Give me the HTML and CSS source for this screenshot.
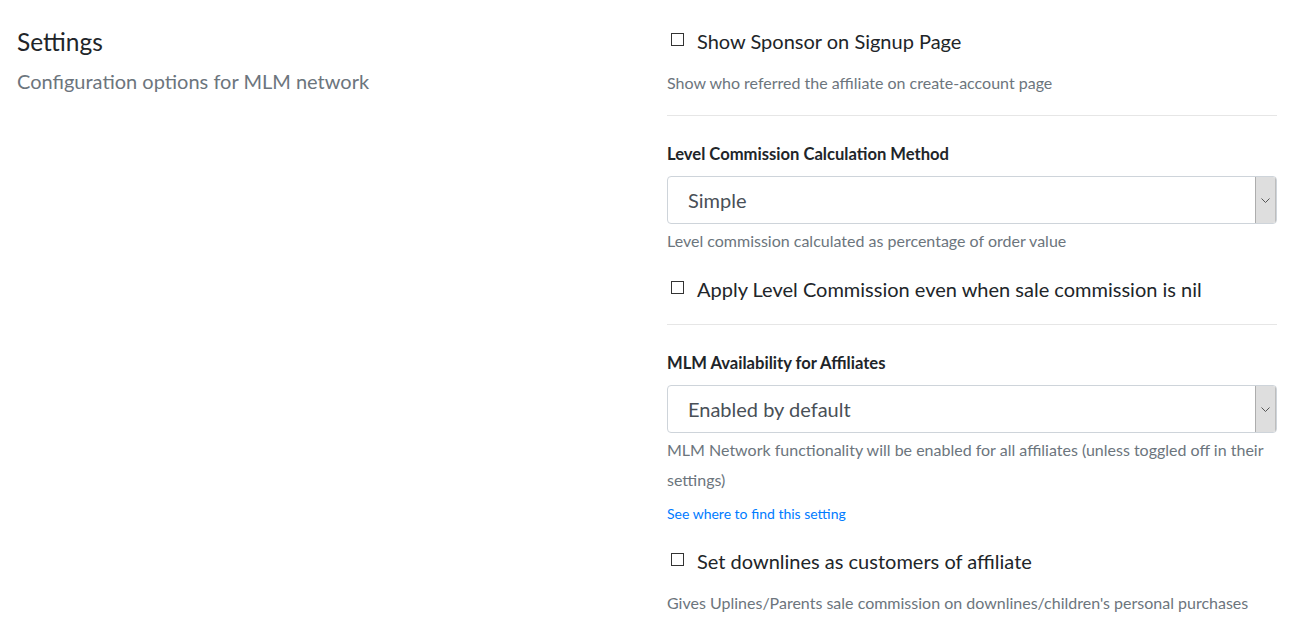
FILE: index.html
```html
<!DOCTYPE html>
<html lang="en">
<head>
<meta charset="utf-8">
<title>Settings</title>
<link rel="stylesheet" href="styles.css">
</head>
<body>
<div class="page">
  <div class="intro">
    <h2 class="title">Settings</h2>
    <p class="subtitle">Configuration options for MLM network</p>
  </div>
  <div class="options">
    <label class="check"><span class="box"></span>Show Sponsor on Signup Page</label>
    <p class="help help-after-check">Show who referred the affiliate on create-account page</p>
    <hr class="sep sep-first">

    <div class="field-label">Level Commission Calculation Method</div>
    <div class="select"><span class="select-value">Simple</span><span class="select-btn"><svg width="9" height="5" viewBox="0 0 9 5"><path d="M0.5 0.5 L4.5 4.5 L8.5 0.5" fill="none" stroke="#555" stroke-width="1"/></svg></span></div>
    <p class="help">Level commission calculated as percentage of order value</p>
    <label class="check check-mid"><span class="box"></span>Apply Level Commission even when sale commission is nil</label>
    <hr class="sep">

    <div class="field-label">MLM Availability for Affiliates</div>
    <div class="select"><span class="select-value">Enabled by default</span><span class="select-btn"><svg width="9" height="5" viewBox="0 0 9 5"><path d="M0.5 0.5 L4.5 4.5 L8.5 0.5" fill="none" stroke="#555" stroke-width="1"/></svg></span></div>
    <p class="help">MLM Network functionality will be enabled for all affiliates (unless toggled off in their settings)</p>
    <a class="link" href="#">See where to find this setting</a>
    <label class="check check-last"><span class="box"></span>Set downlines as customers of affiliate</label>
    <p class="help help-after-check help-last">Gives Uplines/Parents sale commission on downlines/children's personal purchases</p>
  </div>
</div>
</body>
</html>
```
FILE: styles.css
```css
* { box-sizing: border-box; }
html, body { margin: 0; padding: 0; background: #fff; }
body {
  font-family: "Lato", "Open Sans", sans-serif;
  color: #212529;
}
.page {
  display: grid;
  grid-template-columns: 650px 1fr;
}
.intro { padding: 27px 17px 0 17px; }
.title {
  margin: 0;
  font-size: 24.5px;
  font-weight: 400;
  line-height: 29px;
  color: #212529;
}
.subtitle {
  margin: 10px 0 0 0;
  font-size: 20px;
  line-height: 30px;
  color: #6c757d;
}
.options {
  padding: 26px 17px 0 17px;
  display: flex;
  flex-direction: column;
}
.check {
  display: flex;
  align-items: center;
  font-size: 20px;
  line-height: 30px;
  color: #212529;
}
.box {
  width: 13px;
  height: 13px;
  border: 1px solid #333;
  margin: 0 13px 0 4px;
  flex: none;
  position: relative;
  top: -2px;
  background: #fff;
}
.help {
  margin: 2px 0 0 0;
  font-size: 16px;
  line-height: 30px;
  color: #6c757d;
}
.help-after-check { margin-top: 12px; }
.help-last { margin-top: 12px; }
.sep {
  margin: 20px 0 0 0;
  border: 0;
  border-top: 1px solid #e6e6e6;
  height: 0;
}
.sep-first { margin-top: 17px; }
.field-label {
  margin-top: 26px;
  font-size: 16.6px;
  font-weight: 700;
  line-height: 24px;
}
.select {
  margin-top: 10px;
  height: 48px;
  border: 1px solid #ced4da;
  border-radius: 4px;
  display: flex;
  align-items: stretch;
  font-size: 20px;
  color: #495057;
  overflow: hidden;
}
.select-value {
  flex: 1;
  padding-left: 20px;
  display: flex;
  align-items: center;
}
.select-btn {
  width: 21px;
  background: #dedede;
  border-left: 1px solid #adadad;
  border-right: 1px solid #bdbdbd;
  display: flex;
  align-items: center;
  justify-content: center;
}
.check-mid { margin-top: 18px; }
.link {
  margin-top: 8px;
  font-size: 14px;
  line-height: 21px;
  color: #007bff;
  text-decoration: none;
  align-self: flex-start;
}
.check-last { margin-top: 22px; }
```
